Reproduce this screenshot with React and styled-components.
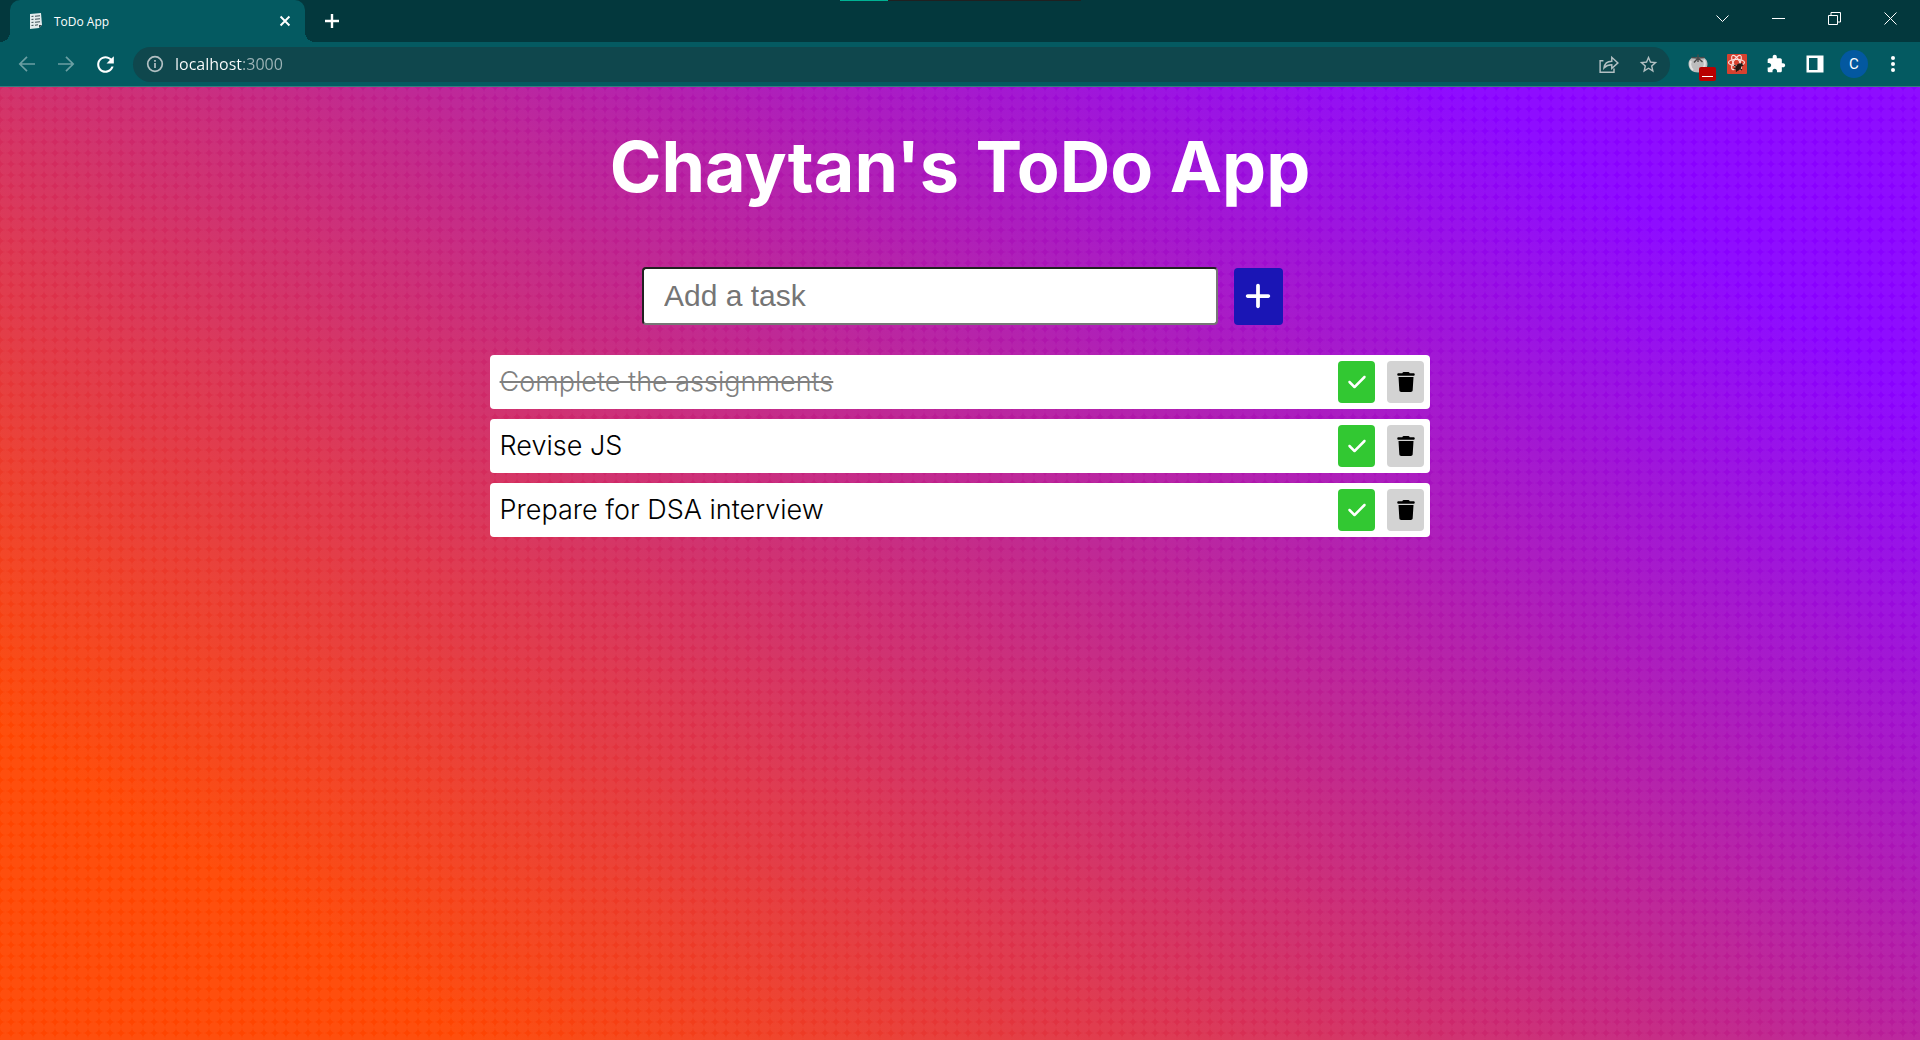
import React, { useState } from 'react';
import styled, { createGlobalStyle } from 'styled-components';
import { FaPlus, FaCheck, FaTrash } from 'react-icons/fa6';

const GlobalStyle = createGlobalStyle`
  *, *::before, *::after { box-sizing: border-box; }
  html, body, #root { height: 100%; }
  body { margin: 0; background: #045a61; }
  button { font: inherit; padding: 0; border: 0; background: none; cursor: pointer; }
`;

const Window = styled.div`
  position: relative;
  display: flex;
  flex-direction: column;
  min-height: 100%;
  font-family: 'Open Sans', 'Noto Sans', sans-serif;
`;

const LoadStrip = styled.div`
  position: absolute;
  top: 0;
  left: 50%;
  width: 241px;
  height: 1px;
  margin-left: -120px;
  background: linear-gradient(to right, #00b294 20%, #202020 20%);
`;

const TabBar = styled.header`
  display: flex;
  height: 42px;
  padding: 0 2px 0 10px;
  background: #03383d;
`;

const Tab = styled.div`
  position: relative;
  display: flex;
  align-items: center;
  width: 295px;
  padding: 0 12px 0 18px;
  border-radius: 10px 10px 0 0;
  background: #045a61;
  color: #fff;
  font-size: 12px;

  &::before, &::after {
    content: '';
    position: absolute;
    bottom: 0;
    width: 10px;
    height: 10px;
  }
  &::before {
    left: -10px;
    background: radial-gradient(circle at 0 0, transparent 10px, #045a61 10px);
  }
  &::after {
    right: -10px;
    background: radial-gradient(circle at 100% 0, transparent 10px, #045a61 10px);
  }
`;

const TabTitle = styled.span`
  flex: 1;
  margin-left: 10px;
`;

const IconButton = styled.button`
  position: relative;
  display: flex;
  align-items: center;
  justify-content: center;
  width: ${(p) => p.$width || 34}px;
  height: ${(p) => p.$height || 34}px;
  color: ${(p) => p.$color || '#fff'};
`;

const NewTab = styled(IconButton)`
  margin-left: 10px;
`;

const WindowControls = styled.div`
  display: flex;
  margin-left: auto;
`;

const Toolbar = styled.nav`
  display: flex;
  align-items: center;
  gap: 11px;
  height: 45px;
  padding: 0 10px;
  border-bottom: 1px solid #36797f;
  background: #045a61;
`;

const ButtonGroup = styled.div`
  display: flex;
  gap: 5px;
`;

const Omnibox = styled.div`
  display: flex;
  align-items: center;
  flex: 1;
  height: 35px;
  padding: 0 5px;
  border-radius: 18px;
  background: #0f474d;
`;

const Address = styled.input`
  flex: 1;
  height: 24px;
  margin: 0 3px;
  padding: 0;
  border: 0;
  outline: 0;
  background: linear-gradient(to right, #fff 68px, #9fb5b8 68px);
  background-clip: text;
  -webkit-background-clip: text;
  -webkit-text-fill-color: transparent;
  color: #fff;
  font: 16px/24px 'Open Sans', 'Noto Sans', sans-serif;
`;

const Avatar = styled.span`
  display: flex;
  align-items: center;
  justify-content: center;
  width: 28px;
  height: 28px;
  border-radius: 50%;
  background: #0358a0;
  color: #fff;
  font: 15px Roboto, sans-serif;
`;

const Page = styled.main`
  display: flex;
  flex: 1;
  flex-direction: column;
  align-items: center;
  padding-top: 40px;
  background:
    radial-gradient(circle at center, rgba(255, 255, 255, 0.05) 5px, transparent 6px) 0 0 / 11px 11px,
    linear-gradient(34deg, #ff4400 14%, #8800ff 86%);
`;

const Title = styled.h1`
  margin: 0;
  color: #fff;
  font: 700 70px/80px Inter, 'Open Sans', sans-serif;
`;

const TaskForm = styled.form`
  display: flex;
  align-items: center;
  justify-content: center;
  gap: 16px;
  width: 49%;
  margin-top: 60px;
  padding-left: 5px;
`;

const TaskInput = styled.input`
  width: 576px;
  height: 58px;
  padding: 0 20px;
  border: 2px inset #767676;
  border-radius: 4px;
  outline: 0;
  background: #fff;
  color: #000;
  font: 30px 'Liberation Sans', Arial, sans-serif;

  &::placeholder { color: #757575; opacity: 1; }
`;

const AddButton = styled.button`
  display: flex;
  align-items: center;
  justify-content: center;
  width: 49px;
  height: 57px;
  border-radius: 4px;
  background: #1a15b5;
  color: #fff;
  font-size: 30px;
`;

const TaskList = styled.ul`
  display: flex;
  flex-direction: column;
  gap: 10px;
  width: 49%;
  margin: 30px 0;
  padding: 0;
  list-style: none;
`;

const TaskRow = styled.li`
  display: flex;
  align-items: center;
  gap: 12px;
  padding: 6px 6px 6px 10px;
  border-radius: 4px;
  background: #fff;
`;

const TaskText = styled.span`
  flex: 1;
  color: ${(p) => (p.$done ? '#808080' : '#000')};
  font: 300 27px/42px Inter, 'Open Sans', sans-serif;
  text-decoration: ${(p) => (p.$done ? 'line-through' : 'none')};
`;

const TaskButton = styled.button`
  display: flex;
  align-items: center;
  justify-content: center;
  width: 37px;
  height: 42px;
  border-radius: 4px;
  background: ${(p) => p.$background};
  color: ${(p) => p.$color};
  font-size: 20px;
`;

const Badge = styled.span`
  position: absolute;
  right: -1px;
  bottom: 0;
  display: flex;
  justify-content: center;
  width: 17px;
  height: 14px;
  border-radius: 2px;
  background: #b90000;

  &::after {
    content: '';
    width: 11px;
    height: 1px;
    margin-top: 9px;
    background: #fff;
  }
`;

const Line = ({ size = 18, width = 1.6, d }) => (
  <svg width={size} height={size} viewBox="0 0 18 18" fill="none" stroke="currentColor" strokeWidth={width} aria-hidden="true">
    <path d={d} />
  </svg>
);

const Solid = ({ size, d }) => (
  <svg width={size} height={size} viewBox="0 0 24 24" fill="currentColor" aria-hidden="true">
    <path d={d} />
  </svg>
);

const Thin = ({ d }) => (
  <svg width="13" height="13" viewBox="0 0 13 13" fill="none" stroke="currentColor" strokeWidth="1" aria-hidden="true">
    <path d={d} />
  </svg>
);

const NotesIcon = () => (
  <svg width="16" height="18" viewBox="0 0 16 18" aria-hidden="true">
    <path d="M2 2l11-1 1 12-3 3-9 1z" fill="#e4ebec" />
    <path d="M14 13l-3 3v-3z" fill="#37474c" />
    <path d="M3.5 4.500l2-.2M7 4.200l5-.4M3.500 7.500l2-.2M7 7.200l5-.4M3.500 10.500l2-.2M7 10.200l5-.4M3.500 13.500l2-.2M7 13.200l3-.4" stroke="#3d5055" strokeWidth="1.100" />
  </svg>
);

const InfoIcon = () => (
  <svg width="18" height="18" viewBox="0 0 18 18" fill="none" stroke="#b3c0c3" strokeWidth="1.700" aria-hidden="true">
    <circle cx="9" cy="9" r="7.300" />
    <path d="M9 8v5M9 5v1.800" />
  </svg>
);

const TomatoIcon = () => (
  <svg width="22" height="22" viewBox="0 0 22 22" aria-hidden="true">
    <path d="M11 4.500c5-1.500 9.500 1.500 9.500 6.500s-4 8.500-9.500 8.500S1.500 16 1.500 11 6 3 11 4.500z" fill="#bdbdbd" />
    <path d="M4 8c-1.500 3-.5 7 2 9M17 7c1.500 3 1 6-1 9" stroke="#e2e2e2" strokeWidth="2" fill="none" />
    <path d="M11 1.500V9M11 5L4.500 4.500M11 5l6.500-.5M11 5L7 9.500M11 5l4.500 4" stroke="#4a4a4a" strokeWidth="1.400" fill="none" />
  </svg>
);

const ReactBugIcon = () => (
  <svg width="20" height="20" viewBox="0 0 20 20" aria-hidden="true">
    <rect width="20" height="20" rx="1" fill="#d7412f" />
    <g fill="none" stroke="#f8dcd8" strokeWidth="1.200">
      <ellipse cx="9.500" cy="8.500" rx="8" ry="3.200" />
      <ellipse cx="9.500" cy="8.500" rx="8" ry="3.200" transform="rotate(60 9.500 8.500)" />
      <ellipse cx="9.500" cy="8.500" rx="8" ry="3.200" transform="rotate(120 9.500 8.500)" />
    </g>
    <ellipse cx="11.500" cy="13" rx="2.600" ry="4" transform="rotate(30 11.500 13)" fill="#241512" />
    <path d="M7 11l8 5M7 15l8-4M9 17.500l6-7M14 9l2 3" stroke="#241512" strokeWidth="1.200" />
  </svg>
);

const SidePanelIcon = () => (
  <svg width="18" height="18" viewBox="0 0 18 18" aria-hidden="true">
    <path d="M.5.5h17v17H.5zM3 3v12h8.500V3z" fill="#fff" fillRule="evenodd" />
  </svg>
);

const DotsIcon = () => (
  <svg width="6" height="18" viewBox="0 0 6 18" fill="#fff" aria-hidden="true">
    <circle cx="3" cy="3" r="2" />
    <circle cx="3" cy="9" r="2" />
    <circle cx="3" cy="15" r="2" />
  </svg>
);

const REFRESH = 'M17.65 6.35C16.2 4.9 14.21 4 12 4c-4.42 0-7.99 3.58-7.99 8s3.57 8 7.99 8c3.73 0 6.84-2.55 7.73-6h-2.08c-.82 2.33-3.04 4-5.65 4-3.31 0-6-2.69-6-6s2.69-6 6-6c1.66 0 3.14.69 4.22 1.78L13 11h7V4l-2.35 2.35z';
const STAR = 'M22 9.24l-7.19-.62L12 2 9.19 8.63 2 9.24l5.46 4.73L5.82 21 12 17.27 18.18 21l-1.63-7.03L22 9.24zM12 15.4l-3.76 2.27 1-4.28-3.32-2.88 4.38-.38L12 6.1l1.71 4.04 4.38.38-3.32 2.88 1 4.28L12 15.4z';
const PUZZLE = 'M20.5 11H19V7c0-1.1-.9-2-2-2h-4V3.5C13 2.12 11.88 1 10.5 1S8 2.12 8 3.500V5H4c-1.1 0-1.99.9-1.99 2v3.8H3.5c1.49 0 2.7 1.21 2.7 2.7s-1.21 2.7-2.7 2.7H2V20c0 1.1.9 2 2 2h3.8v-1.5c0-1.49 1.21-2.7 2.7-2.7 1.49 0 2.7 1.21 2.7 2.7V22H17c1.1 0 2-.9 2-2v-4h1.5c1.38 0 2.5-1.12 2.5-2.5S21.88 11 20.5 11z';

const INITIAL_TASKS = [
  { id: 1, text: 'Complete the assignments', done: true },
  { id: 2, text: 'Revise JS', done: false },
  { id: 3, text: 'Prepare for DSA interview', done: false },
];

function BrowserChrome() {
  return (
    <>
      <TabBar>
        <Tab>
          <NotesIcon />
          <TabTitle>ToDo App</TabTitle>
          <IconButton $width={16} $height={16} aria-label="Close tab">
            <Line size={16} width={2.2} d="M4 4l10 10M14 4L4 14" />
          </IconButton>
        </Tab>
        <NewTab $height={42} aria-label="New tab">
          <Line width={2.4} d="M9 2v14M2 9h14" />
        </NewTab>
        <WindowControls>
          <IconButton $width={56} $height={37} aria-label="Search tabs"><Thin d="M.5 3.500l6 6 6-6" /></IconButton>
          <IconButton $width={56} $height={37} aria-label="Minimize"><Thin d="M0 6.500h13" /></IconButton>
          <IconButton $width={56} $height={37} aria-label="Restore"><Thin d="M.5 3.500h9v9h-9zM3 3.500v-3h9.500V10h-3" /></IconButton>
          <IconButton $width={56} $height={37} aria-label="Close"><Thin d="M.5.5l12 12M12.500.5l-12 12" /></IconButton>
        </WindowControls>
      </TabBar>
      <Toolbar>
        <ButtonGroup>
          <IconButton $color="#6b9fa3" aria-label="Back"><Line width={1.7} d="M17 9H2M9 1.800L1.800 9 9 16.200" /></IconButton>
          <IconButton $color="#6b9fa3" aria-label="Forward"><Line width={1.7} d="M1 9h15M9 1.800L16.200 9 9 16.200" /></IconButton>
          <IconButton aria-label="Reload"><Solid size={25} d={REFRESH} /></IconButton>
        </ButtonGroup>
        <Omnibox>
          <IconButton aria-label="Site information"><InfoIcon /></IconButton>
          <Address aria-label="Address" defaultValue="localhost:3000" spellCheck={false} />
          <ButtonGroup>
            <IconButton $color="#b3c0c3" aria-label="Share">
              <Line size={20} width={1.3} d="M4 6H1v10.500h12.500V13M4.500 12.500c.5-4 3-6 7-6V3l5.500 5-5.500 5V9.700c-3 0-5 .8-7 2.800z" />
            </IconButton>
            <IconButton $color="#b3c0c3" aria-label="Bookmark"><Solid size={21} d={STAR} /></IconButton>
          </ButtonGroup>
        </Omnibox>
        <ButtonGroup>
          <IconButton aria-label="Timer extension"><TomatoIcon /><Badge /></IconButton>
          <IconButton aria-label="React extension"><ReactBugIcon /></IconButton>
          <IconButton aria-label="Extensions"><Solid size={20} d={PUZZLE} /></IconButton>
          <IconButton aria-label="Side panel"><SidePanelIcon /></IconButton>
          <IconButton aria-label="Profile"><Avatar>C</Avatar></IconButton>
          <IconButton aria-label="Menu"><DotsIcon /></IconButton>
        </ButtonGroup>
      </Toolbar>
    </>
  );
}

export default function App() {
  const [tasks, setTasks] = useState(INITIAL_TASKS);
  const [draft, setDraft] = useState('');

  const addTask = (event) => {
    event.preventDefault();
    if (!draft.trim()) return;
    setTasks([...tasks, { id: Date.now(), text: draft.trim(), done: false }]);
    setDraft('');
  };
  const toggle = (id) => setTasks(tasks.map((t) => (t.id === id ? { ...t, done: !t.done } : t)));
  const remove = (id) => setTasks(tasks.filter((t) => t.id !== id));

  return (
    <Window>
      <GlobalStyle />
      <BrowserChrome />
      <LoadStrip />
      <Page>
        <Title>Chaytan's ToDo App</Title>
        <TaskForm onSubmit={addTask}>
          <TaskInput
            aria-label="Add a task"
            placeholder="Add a task"
            value={draft}
            onChange={(event) => setDraft(event.target.value)}
          />
          <AddButton type="submit" aria-label="Add"><FaPlus /></AddButton>
        </TaskForm>
        <TaskList>
          {tasks.map((task) => (
            <TaskRow key={task.id}>
              <TaskText $done={task.done}>{task.text}</TaskText>
              <TaskButton $background="#32c832" $color="#fff" aria-label="Complete" onClick={() => toggle(task.id)}>
                <FaCheck />
              </TaskButton>
              <TaskButton $background="#d3d3d3" $color="#000" aria-label="Delete" onClick={() => remove(task.id)}>
                <FaTrash />
              </TaskButton>
            </TaskRow>
          ))}
        </TaskList>
      </Page>
    </Window>
  );
}
